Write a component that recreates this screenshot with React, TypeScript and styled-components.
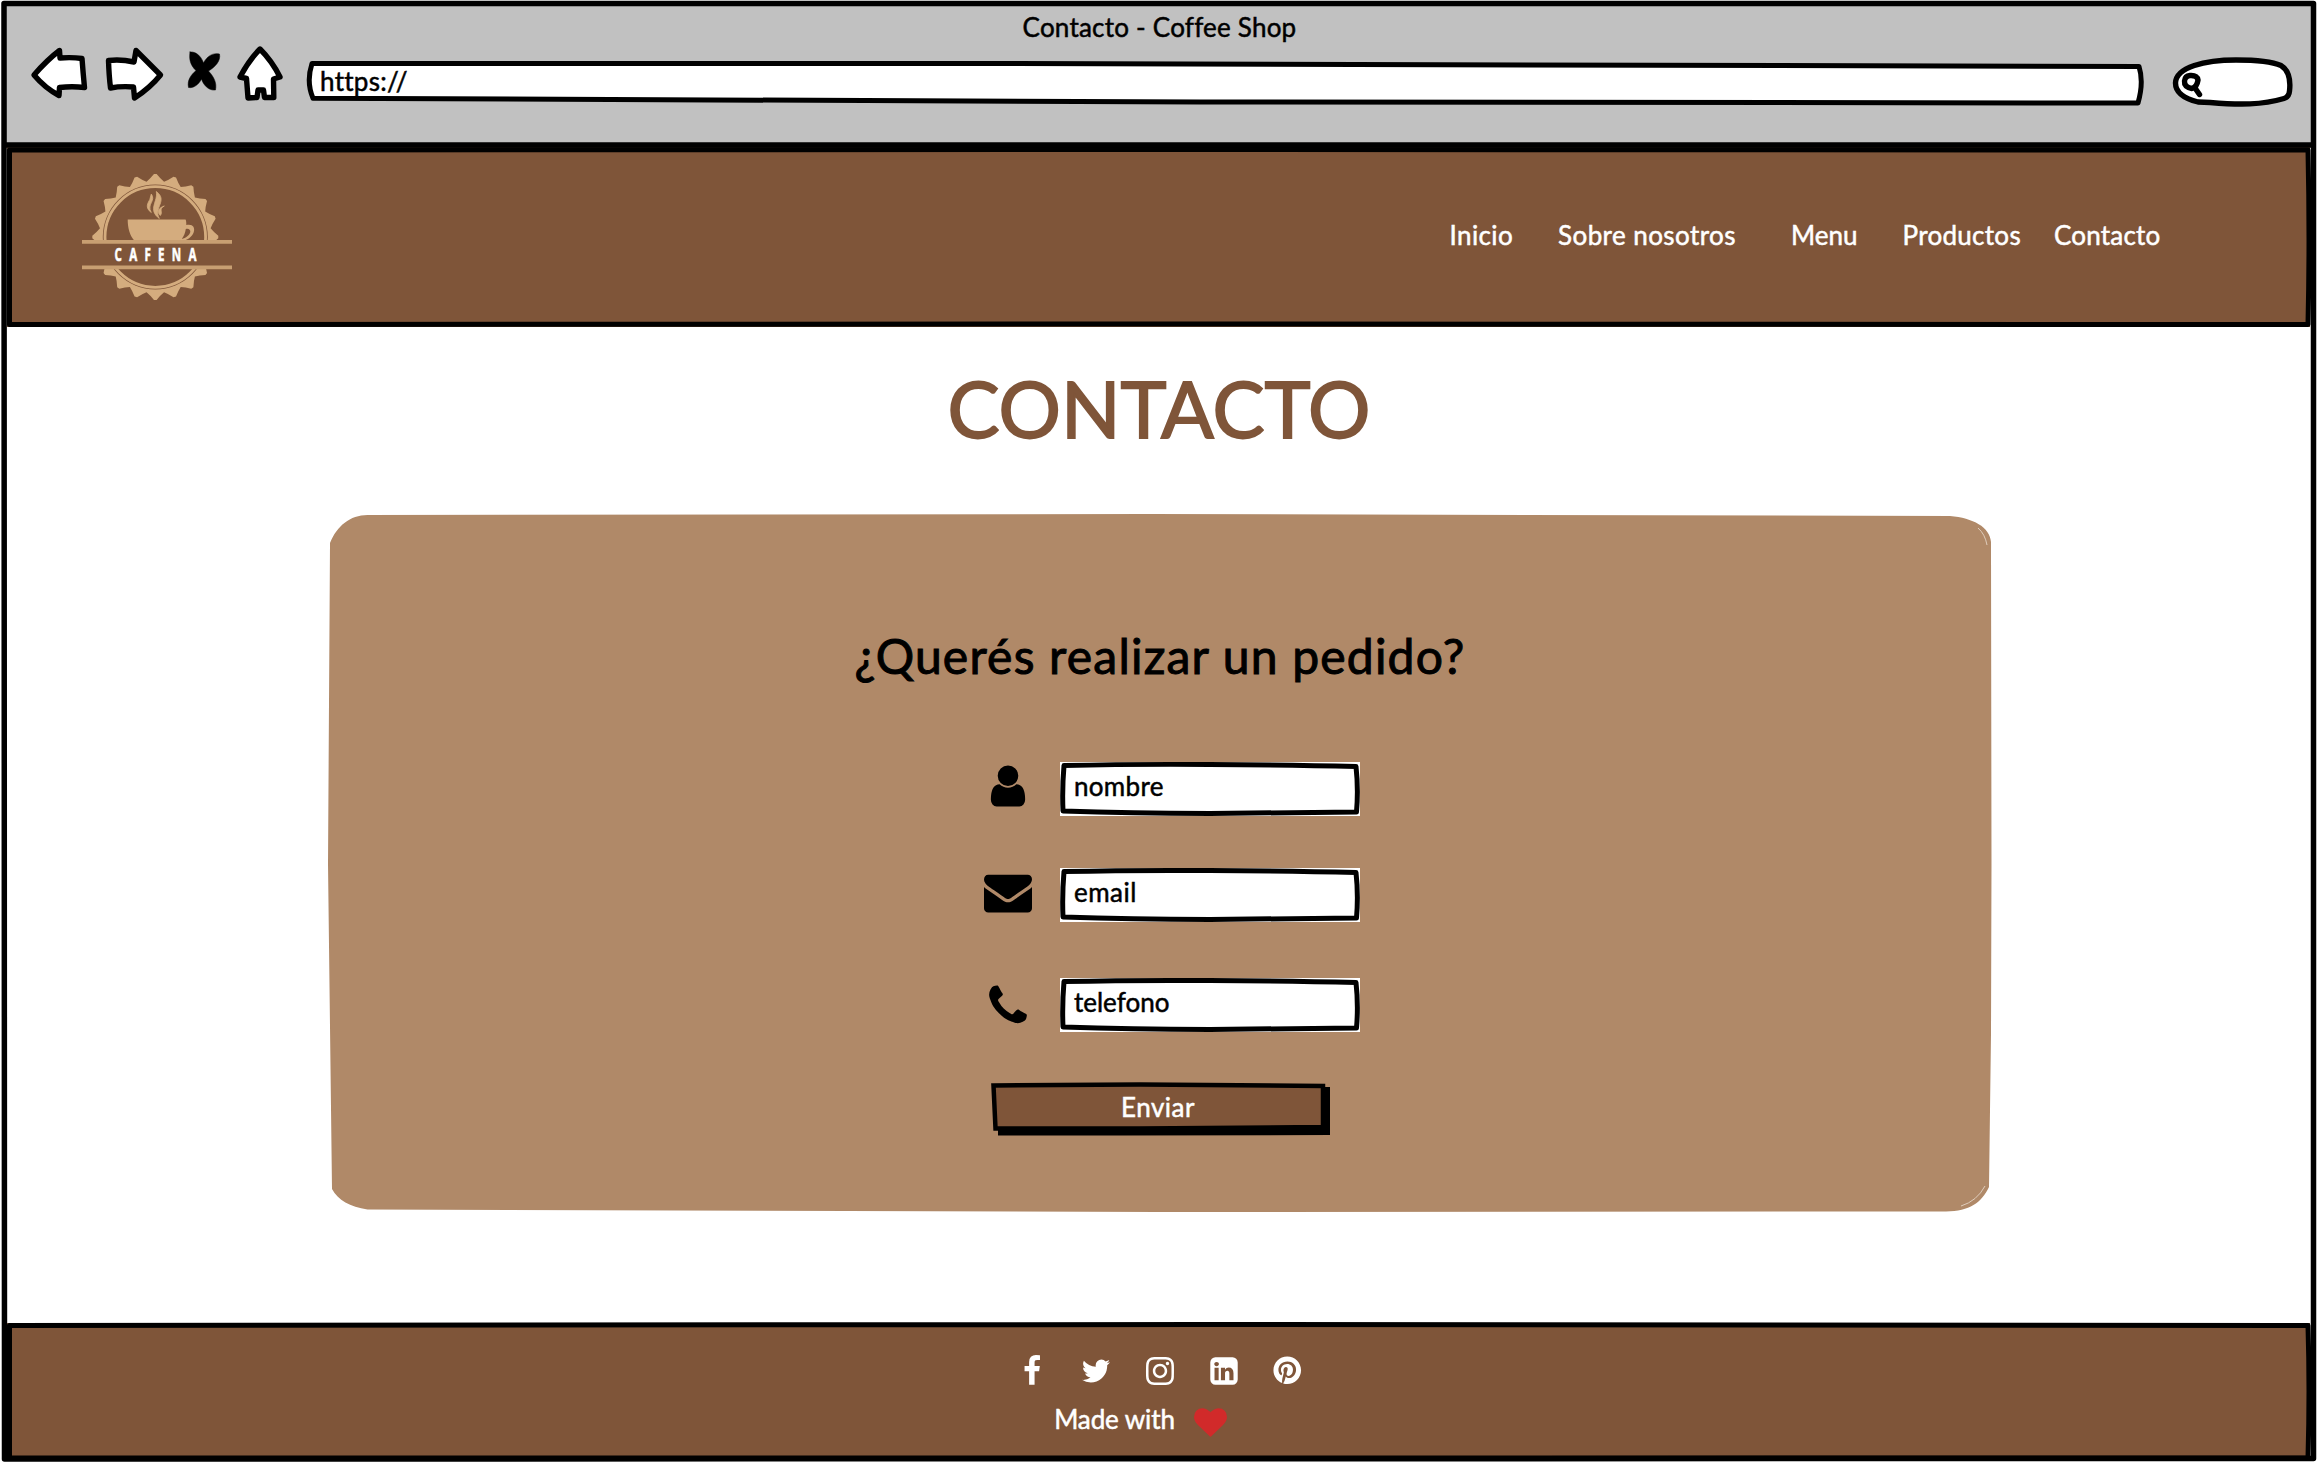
import React from "react";
import styled, { createGlobalStyle } from "styled-components";
import { FaInstagram, FaPinterest } from "react-icons/fa";

const brown = "#7f5539";
const tan = "#b08968";
const gold = "#d4ac7e";

const GlobalStyle = createGlobalStyle`
  *, *::before, *::after { box-sizing: border-box; }
  body { margin: 0; background: #fff; }
`;

const Window = styled.div`
  position: relative;
  width: 2318px;
  height: 1462px;
  padding: 3px 5px 2px;
  display: flex;
  flex-direction: column;
  overflow: hidden;
  background: #fff;
  color: #000;
  font-family: Lato, "Liberation Sans", sans-serif;
  font-size: 26px;
`;

const Outline = styled.svg`
  position: absolute;
  inset: 0;
  width: 100%;
  height: 100%;
  overflow: visible;
  pointer-events: none;
  fill: none;
  stroke: #000;
  stroke-width: 5;
  stroke-linejoin: round;
`;

const Label = styled.span<{ $spacing?: number }>`
  display: block;
  line-height: 32px;
  white-space: nowrap;
  letter-spacing: ${(p) => p.$spacing ?? 0}px;
  -webkit-text-stroke: 0.5px currentColor;
`;

const BrowserBar = styled.div`
  height: 143px;
  flex: none;
  padding-top: 8px;
  display: flex;
  flex-direction: column;
  background: #c1c1c1;
`;

const PageTitle = styled.div`
  display: flex;
  justify-content: center;
  height: 34px;
  padding-left: 1px;
`;

const Toolbar = styled.div`
  display: flex;
  height: 63px;
  padding-left: 25px;
`;

const Glyph = styled.svg<{ $gap?: number }>`
  flex: none;
  margin-right: ${(p) => p.$gap ?? 0}px;
  height: 63px;
  overflow: visible;
  fill: #fff;
  stroke: #000;
  stroke-width: 5.4;
  stroke-linejoin: round;
  stroke-linecap: round;
`;

const AddressBar = styled.div`
  position: relative;
  width: 1840px;
  margin-right: 24px;
  padding: 19.5px 0 0 14px;
`;

const Address = styled(Label)`
  position: relative;
`;

const Slashes = styled.span`
  letter-spacing: 2.6px;
`;

const Header = styled.header`
  position: relative;
  flex: none;
  height: 181px;
  margin: 0 3px 0 2px;
  padding: 27px 146px 0 75px;
  display: flex;
  justify-content: space-between;
  background: ${brown};
`;

const Nav = styled.nav`
  display: flex;
  padding-top: 46px;
  color: #fff;
`;

const NavItem = styled(Label)<{ $width: number }>`
  width: ${(p) => p.$width}px;
`;

const Main = styled.main`
  flex: 1;
  display: flex;
  flex-direction: column;
  align-items: center;
`;

const Heading = styled.h1`
  margin: 33px 0 0;
  height: 154px;
  font-size: 78px;
  line-height: 96px;
  font-weight: 400;
  -webkit-text-stroke: 1.8px ${brown};
  color: ${brown};
`;

const Card = styled.section`
  position: relative;
  width: 1664px;
  height: 698px;
  margin-left: 2px;
  background: ${tan};
  clip-path: path("M2 29C9 12 22 1 39.500 1L820 0L1622 2C1645 4 1662 13 1663 28L1663.500 350L1663 520L1661 673C1653 689 1642 697 1618 697.500L830 698L39.500 695.500C22 693 10 686 4 675L0 350Z");
  display: flex;
  flex-direction: column;
  align-items: center;
`;

const Question = styled.h2`
  margin: 112px 0 0;
  height: 136px;
  font-size: 48px;
  line-height: 60px;
  font-weight: 400;
  letter-spacing: 1.2px;
  white-space: nowrap;
  -webkit-text-stroke: 1px #000;
`;

const Form = styled.form`
  width: 376px;
  margin-left: 24px;
  display: flex;
  flex-direction: column;
`;

const Field = styled.label<{ $after: number }>`
  display: flex;
  align-items: flex-start;
  justify-content: space-between;
  height: 54px;
  margin-bottom: ${(p) => p.$after}px;
`;

const FieldIcon = styled.span<{ $top: number }>`
  display: flex;
  padding-top: ${(p) => p.$top}px;
`;

const FieldBox = styled.span`
  position: relative;
  width: 300px;
  height: 54px;
  padding: 8px 14px;
  background: #fff;
`;

const Solid = styled.svg<{ $size: number; $color?: string }>`
  flex: none;
  width: ${(p) => p.$size}px;
  height: ${(p) => p.$size}px;
  fill: ${(p) => p.$color ?? "currentColor"};
`;

const Submit = styled.button`
  position: relative;
  width: 339px;
  height: 54px;
  margin-left: 7px;
  padding: 8px 0 0;
  border: 0;
  background: none;
  display: flex;
  justify-content: center;
  align-items: flex-start;
  color: #fff;
  font: inherit;
`;

const SubmitText = styled(Label)`
  position: relative;
  margin-right: 5px;
`;

const Footer = styled.footer`
  position: relative;
  flex: none;
  height: 138px;
  margin: 0 3px 0 2px;
  padding-top: 32.5px;
  display: flex;
  flex-direction: column;
  align-items: center;
  color: #fff;
`;

const FooterFill = styled.div`
  position: absolute;
  inset: 1px 0 2px;
  background: ${brown};
`;

const Social = styled.div`
  position: relative;
  display: flex;
  gap: 32px;
  height: 32px;
  margin-left: 2px;
  align-items: center;
  font-size: 32px;
`;

const Slot = styled.span`
  width: 32px;
  height: 32px;
  display: flex;
  align-items: center;
  justify-content: center;
`;

const Credit = styled.div`
  position: relative;
  margin: 16.5px 0 0 -36px;
  display: flex;
  align-items: flex-start;
  gap: 19px;
`;

const HeartSlot = styled.span`
  display: flex;
  padding-top: 2.5px;
`;

const paths = {
  user: "M1536 1399q0 109-62.5 187t-150.5 78h-854q-88 0-150.5-78t-62.5-187q0-85 8.5-160.5t31.5-152 58.5-131 94-89 134.5-34.5q131 128 313 128t313-128q76 0 134.5 34.5t94 89 58.5 131 31.5 152 8.5 160.5zM1280 512q0 159-112.5 271.5t-271.5 112.5-271.5-112.5-112.5-271.5 112.5-271.5 271.5-112.5 271.5 112.5 112.5 271.5z",
  mail: "M1792 710v794q0 66-47 113t-113 47h-1472q-66 0-113-47t-47-113v-794q44 49 101 87 362 246 497 345 57 42 92.5 65.5t94.5 48 110 24.5h2q51 0 110-24.5t94.5-48 92.5-65.5q170-123 498-345 57-39 100-87zM1792 416q0 79-49 151t-122 123q-376 261-468 325-10 7-42.5 31t-54 38.5-52 32.5-57.5 27-50 9h-2q-23 0-50-9t-57.5-27-52-32.5-54-38.5-42.5-31q-91-64-262-182.5t-205-142.5q-62-42-117-115.5t-55-136.5q0-78 41.5-130t118.500-52h1472q65 0 112.5 47t47.5 113z",
  phone: "M1600 1240q0 27-10 70.5t-21 68.5q-21 50-122 106-94 51-186 51-27 0-53-3.5t-57.5-12.5-47-14.5-55.5-20.5-49-18q-98-35-175-83-127-79-264-216t-216-264q-48-77-83-175-3-9-18-49t-20.5-55.5-14.5-47-12.5-57.5-3.5-53q0-92 51-186 56-101 106-122 25-11 68.5-21t70.5-10q14 0 21 3 18 6 53 76 11 19 30 54t35 63.5 31 53.5q3 4 17.5 25t21.5 35.5 7 28.5q0 20-28.5 50t-62 55-62 53-28.5 46q0 9 5 22.5t8.5 20.5 14 24 11.500 19q76 137 174 235t235 174q2 1 19 11.5t24 14 20.5 8.5 22.5 5q18 0 46-28.5t53-62 55-62 50-28.5q14 0 28.5 7t35.5 21.5 25 17.5q25 15 53.5 31t63.5 35 54 30q70 35 76 53 3 7 3 21z",
  facebook: "M1343 12v264h-157q-86 0-116 36t-30 108v189h293l-39 296h-254v759h-306v-759h-255v-296h255v-218q0-186 104-288.5t277-102.5q147 0 228 12z",
  twitter: "M1684 408q-67 98-162 167 1 14 1 42 0 130-38 259.5t-115.5 248.5-184.5 210.5-258 146-323 54.5q-271 0-496-145 35 4 78 4 225 0 401-138-105-2-188-64.5t-114-159.500q33 5 61 5 43 0 85-11-112-23-185.5-111.5t-73.5-205.5v-4q68 38 146 41-66-44-105-115t-39-154q0-88 44-163 121 149 294.5 238.5t371.5 99.5q-8-38-8-74 0-134 94.5-228.5t228.5-94.5q140 0 236 102 109-21 205-78-37 115-142 178 93-10 186-50z",
  linkedin: "M365 1414h231v-694h-231v694zm246-908q-1-52-36-86t-93-34-94.5 34-36.5 86q0 51 35.5 85.5t92.5 34.5h1q59 0 95-34.5t36-85.500zm585 908h231v-398q0-154-73-233t-193-79q-136 0-209 117h2v-101h-231q3 66 0 694h231v-388q0-38 7-56 15-35 45-59.5t74-24.500q116 0 116 157v371zm468-998v960q0 119-84.5 203.5t-203.5 84.5h-960q-119 0-203.5-84.5t-84.5-203.5v-960q0-119 84.5-203.5t203.5-84.5h960q119 0 203.5 84.5t84.5 203.5z",
  heart: "M896 1664q-26 0-44-18l-624-602q-10-8-27.5-26t-55.5-65.5-68-97.500-53.5-121-23.5-138q0-220 127-344t351-124q62 0 126.5 21.5t120 58 95.5 68.5 76 68q36-36 76-68t95.5-68.5 120-58 126.5-21.5q224 0 351 124t127 344q0 221-229 450l-623 600q-18 18-44 18z",
};

const Icon = ({ name, size, color }: { name: keyof typeof paths; size: number; color?: string }) => (
  <Solid viewBox="0 0 1792 1792" $size={size} $color={color}>
    <path d={paths[name]} />
  </Solid>
);

const gearPath = () => {
  const pt = (deg: number, r: number) => {
    const a = ((deg - 90) * Math.PI) / 180;
    return `${(75 + r * Math.cos(a)).toFixed(2)} ${(64 + r * Math.sin(a)).toFixed(2)}`;
  };
  let d = `M${pt(-1.2, 63)}`;
  for (let i = 0; i < 20; i++) {
    const t = i * 18;
    d += `L${pt(t + 1.2, 63)}Q${pt(t + 5, 58.5)} ${pt(t + 9, 56)}Q${pt(t + 13, 58.5)} ${pt(t + 16.8, 63)}`;
  }
  return d + "Z";
};

const LogoArt = styled.svg`
  width: 150px;
  height: 128px;
  flex: none;
  overflow: visible;
`;

const Logo = () => (
  <LogoArt viewBox="0 0 150 128">
    <g transform="translate(-1.700 0)">
      <path d={gearPath()} fill={gold} />
      <circle cx="75" cy="64" r="52.500" fill={brown} />
      <circle cx="75" cy="64" r="50.300" fill="none" stroke={gold} strokeWidth="2.800" />
      <path d="M47.400 46.500H105q1 0 1 5.500c6-1.500 9 2 7.500 7-2 5.500-6 7.500-11 9H54.500C49.500 63 47.400 55 47.400 46.500ZM105.500 56c-.5 4-2 7-4 10 4-1 8-4 8.500-7 .4-2.500-2-4-4.500-3Z" fill={gold} fillRule="evenodd" />
      <path d="M71 21c5 7-5 10 0 18.500-7-5-3-10-1.500-13ZM76 18.500c12 9-3 16 3 27-12-9-1-17-3-27ZM84 33c-6 3-1 6-4 9.500-4-4-1-8 4-9.500Z" fill={gold} stroke={gold} strokeWidth="0.800" />
    </g>
    <path d="M0 67h150v28H0z" fill={brown} />
    <path d="M0 67h150v3.700H0zM0 92.500h150v3.700H0z" fill="#c89f72" />
    <text transform="translate(32.500 88) scale(0.640 1)" fill="#fff" stroke="#fff" strokeWidth="0.600" fontSize="18" fontWeight="700" fontFamily='"Open Sans", sans-serif' textLength="128" lengthAdjust="spacing">
      CAFENA
    </text>
  </LogoArt>
);

const fields: { icon: "user" | "mail" | "phone"; text: string; after: number; spacing: number; top: number }[] = [
  { icon: "user", text: "nombre", after: 52, spacing: 0.3, top: 0 },
  { icon: "mail", text: "email", after: 56, spacing: 0.5, top: 0 },
  { icon: "phone", text: "telefono", after: 51, spacing: 0, top: 4 },
];

const links = [
  { text: "Inicio", width: 108.5, spacing: 0.4 },
  { text: "Sobre nosotros", width: 233, spacing: 0.43 },
  { text: "Menu", width: 111.5, spacing: 0 },
  { text: "Productos", width: 151.5, spacing: 0.3 },
  { text: "Contacto", width: 110, spacing: 0.2 },
];

export default function App() {
  return (
    <>
      <GlobalStyle />
      <Window>
        <BrowserBar>
          <PageTitle>
            <Label $spacing={0.22}>Contacto - Coffee Shop</Label>
          </PageTitle>
          <Toolbar>
            <Glyph width="58" viewBox="30 45 58 63" $gap={16}>
              <path d="M34 75Q47 60 59.500 50.500L60 58Q72 57 82 58.500Q83 72 84.500 87.500Q72 86 59.500 87.500L59 95.500Q45 88 34 75Z" />
            </Glyph>
            <Glyph width="62" viewBox="104 45 62 63" $gap={20}>
              <path d="M108.500 60.500Q121 59 134 62L136 50.500L160.500 75Q150 88 134.500 98L133.500 87Q121 86 110.500 88Q109 76 108.500 60.500Z" />
            </Glyph>
            <Glyph width="36" viewBox="186 45 36 63" $gap={14}>
              <path
                d="M190 52C197 51 202 58 203.500 63C207 56 213 52.500 219.500 54C221 61 215 67 208.500 71C214 77 217 83 215.500 90C208 91 203 84 201.500 79C199 84 194 88.500 188.500 87.500C187 80 191 75 196 70.500C190 65 189 59 190 52Z"
                fill="#000"
                strokeWidth="0.500"
              />
            </Glyph>
            <Glyph width="48" viewBox="236 45 48 63" $gap={22}>
              <path d="M260 49Q272 61 280 77L273.500 79L273.800 97.500H264.500L263.500 90H258L257 97.500L248 98L246.500 78.500L240 77Q249 60 260 49Z" />
            </Glyph>
            <AddressBar>
              <Outline viewBox="306 45 1840 63">
                <path d="M312 63.500H1000L2139 66.500Q2144 82 2138 103L1200 102L313 98.200Q306 82 312 63.500Z" fill="#fff" />
              </Outline>
              <Address $spacing={0.3}>
                https:<Slashes>//</Slashes>
              </Address>
            </AddressBar>
            <Glyph width="126" viewBox="2170 45 126 63">
              <path d="M2198 102C2182 98 2175.500 92 2175.500 83C2176 67 2205 60 2236 60C2258 60 2273 62 2281 65.500C2288 70 2291 78 2289.500 91Q2289 97 2284 98.500C2262 105 2240 105 2210 102.500Z" />
              <path d="M2190 75.500Q2197 75 2198 80Q2197 87 2192 88.500Q2184 87 2184.500 81Q2185 76 2190 75.500ZM2195 88L2199.500 94.500" />
            </Glyph>
          </Toolbar>
        </BrowserBar>

        <Header>
          <Logo />
          <Nav>
            {links.map((l) => (
              <NavItem key={l.text} $width={l.width} $spacing={l.spacing}>
                {l.text}
              </NavItem>
            ))}
          </Nav>
          <Outline viewBox="7 146 2303 181">
            <path d="M9.500 150L1200 149.500L2308 150Q2310 240 2308 324.500L1200 324L9.500 324.500Z" />
          </Outline>
        </Header>

        <Main>
          <Heading>CONTACTO</Heading>
          <Card>
            <Question>¿Querés realizar un pedido?</Question>
            <Form>
              {fields.map((f) => (
                <Field key={f.icon} $after={f.after}>
                  <FieldIcon $top={f.top}>
                    <Icon name={f.icon} size={48} />
                  </FieldIcon>
                  <FieldBox>
                    <Outline viewBox="0 0 300 54">
                      <path d="M4 3.500Q70 2 150 2.500Q230 3 296 4.500Q298.500 27 296.500 50Q220 51 150 51.500Q70 51 3 49Q2 27 4 3.500Z" />
                    </Outline>
                    <Label $spacing={f.spacing}>{f.text}</Label>
                  </FieldBox>
                </Field>
              ))}
              <Submit type="button">
                <Outline viewBox="991 1083 339 54">
                  <path d="M998 1087H1330V1135L1120 1135.500H998Z" fill="#000" stroke="none" />
                  <path d="M993.500 1085.500L1140 1084.500L1323 1086V1127L1140 1128.500L995.500 1128.500Z" fill={brown} strokeWidth="4.500" strokeLinejoin="miter" />
                </Outline>
                <SubmitText $spacing={0.5}>Enviar</SubmitText>
              </Submit>
            </Form>
            <Outline viewBox="328 514 1664 698">
              <path d="M1978 528Q1985 534 1987 545M1985 1186Q1977 1201 1961 1206" stroke="#dfcdbc" strokeWidth="1" />
            </Outline>
          </Card>
        </Main>

        <Footer>
          <FooterFill />
          <Social>
            <Slot><Icon name="facebook" size={32} /></Slot>
            <Slot><Icon name="twitter" size={32} /></Slot>
            <Slot><FaInstagram /></Slot>
            <Slot><Icon name="linkedin" size={32} /></Slot>
            <Slot><FaPinterest size={28.5} /></Slot>
          </Social>
          <Credit>
            <Label $spacing={-0.1}>Made with</Label>
            <HeartSlot>
              <Icon name="heart" size={33} color="#d12a2a" />
            </HeartSlot>
          </Credit>
          <Outline viewBox="7 1322 2303 138">
            <path d="M9.500 1325.500L1200 1324.500L2308 1325.500Q2310 1390 2308 1458L9.500 1458Z" />
          </Outline>
        </Footer>

        <Outline viewBox="0 0 2318 1462">
          <path d="M4 3.500H2313.500Q2312.500 700 2313.500 1458.500L4.500 1459Q5 700 4 3.500ZM4 145H2313" strokeWidth="5.500" />
        </Outline>
      </Window>
    </>
  );
}
